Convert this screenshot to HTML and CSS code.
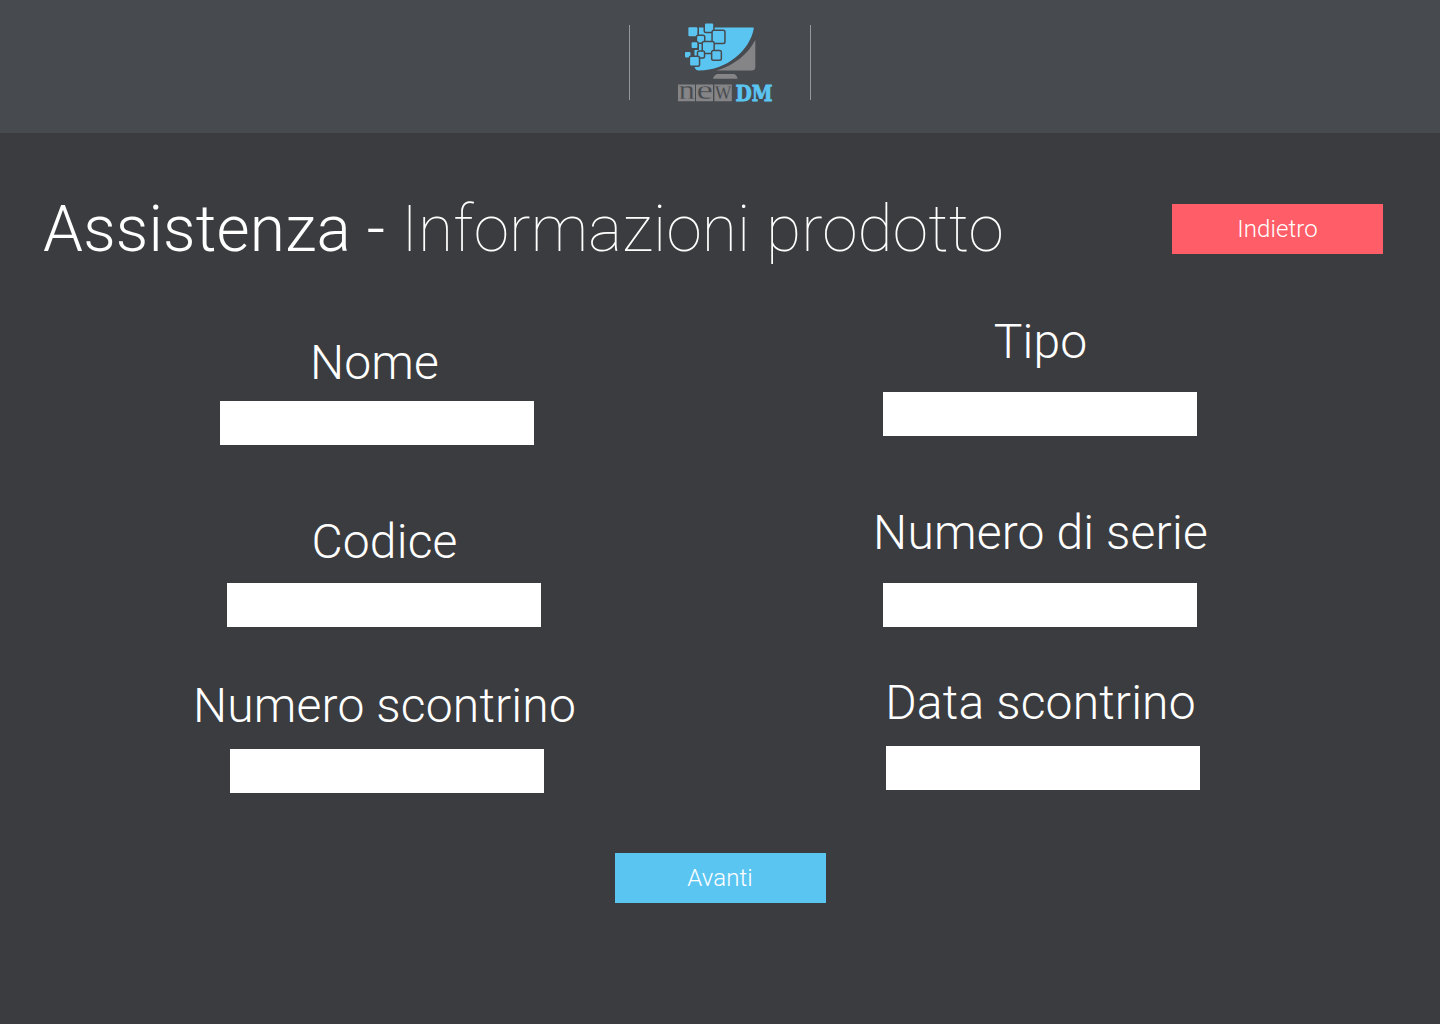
FILE: index.html
```html
<!DOCTYPE html>
<html lang="it">
<head>
<meta charset="utf-8">
<title>newDM - Assistenza</title>
<link rel="stylesheet" href="styles.css">
</head>
<body>
<header class="topbar">
  <div class="brand">
    <svg class="logo" viewBox="675 20 100 92" role="img" aria-label="newDM">
      <path class="blue" d="M699 27.5H753Q754 27.5 753.8 28.5C750 50 727 70.5 699 70.5Q695.5 70.5 694.5 67V50H699Z"/>
      <path class="grey" d="M755.3 40V67Q755.3 70.5 751.5 70.5H716.5C735 65 748 54 755.3 40Z"/>
      <path class="grey" d="M717 74H734Q737 75 737.5 78.8H713Q714 75 717 74Z"/>
      <g class="pixels">
        <rect x="688.4" y="27.3" width="9" height="9" rx="1"/>
        <rect x="705" y="23.5" width="8.2" height="8.2" rx="1"/>
        <rect x="712.8" y="31" width="11.4" height="11.8" rx="1"/>
        <rect x="697.2" y="36" width="6.8" height="6.6" rx="1"/>
        <rect x="691.6" y="42.3" width="5.7" height="5.7" rx="1"/>
        <rect x="703" y="42.2" width="10.4" height="10.6" rx="1"/>
        <rect x="685" y="51.9" width="5.5" height="5.5" rx="1"/>
        <rect x="698.2" y="51.7" width="5.6" height="5.6" rx="1"/>
        <rect x="712.4" y="51.2" width="8.2" height="8.2" rx="1"/>
        <rect x="690.1" y="56.9" width="8.7" height="8.7" rx="1"/>
      </g>
      <path class="grey" d="M678 84.4h17v16.8h-17zM696 84.4h17v16.8h-17zM714.4 84.4h17.4v16.8h-17.4z"/>
      <g class="word-new">
        <text x="678.4" y="99" textLength="16.4" lengthAdjust="spacingAndGlyphs">n</text>
        <text x="696.4" y="99" textLength="16.4" lengthAdjust="spacingAndGlyphs">e</text>
        <text x="714.5" y="99" textLength="17.2" lengthAdjust="spacingAndGlyphs">w</text>
      </g>
      <text class="word-dm" x="735.5" y="100.8" textLength="37" lengthAdjust="spacingAndGlyphs">DM</text>
    </svg>
  </div>
</header>
<main class="page">
  <div class="heading">
    <h1 class="title">Assistenza - <span class="subtitle">Informazioni prodotto</span></h1>
    <button class="button button-back" type="button">Indietro</button>
  </div>
  <form class="product-form">
    <div class="columns">
      <div class="column column-left">
        <div class="field nome"><label for="nome">Nome</label><input id="nome"></div>
        <div class="field codice"><label for="codice">Codice</label><input id="codice"></div>
        <div class="field scontrino"><label for="scontrino">Numero scontrino</label><input id="scontrino"></div>
      </div>
      <div class="column column-right">
        <div class="field tipo"><label for="tipo">Tipo</label><input id="tipo"></div>
        <div class="field serie"><label for="serie">Numero di serie</label><input id="serie"></div>
        <div class="field data"><label for="data">Data scontrino</label><input id="data"></div>
      </div>
    </div>
    <button class="button button-next" type="button">Avanti</button>
  </form>
</main>
</body>
</html>
```
FILE: styles.css
```css
* { box-sizing: border-box; }

body {
  margin: 0;
  min-height: 1024px;
  background: #3b3c3f;
  color: #fff;
  font-family: Roboto, sans-serif;
  font-weight: 300;
}

.topbar {
  display: flex;
  justify-content: center;
  height: 133px;
  padding-top: 20px;
  background: #474a4e;
}

.brand {
  width: 182px;
  height: 92px;
  padding-left: 46px;
  background:
    linear-gradient(#979797, #979797) 0 5px / 1px 75px no-repeat,
    linear-gradient(#979797, #979797) 100% 5px / 1px 75px no-repeat;
}

.logo { display: block; width: 100px; height: 92px; overflow: visible; }
.blue, .word-dm { fill: #5bc5f2; }
.grey { fill: #858587; }
.pixels { fill: #5bc5f2; stroke: #474a4e; stroke-width: 3px; paint-order: stroke; }
.word-new {
  fill: #474a4e;
  stroke: #858587;
  stroke-width: .3px;
  font-family: "Liberation Serif", serif;
  font-size: 27px;
  font-weight: 400;
}
.word-dm {
  font-family: "DejaVu Serif", serif;
  font-size: 22px;
  font-weight: 700;
  stroke: #5bc5f2;
  stroke-width: .9px;
}

.page { padding: 59px 57px 0 43px; }

.heading {
  display: flex;
  justify-content: space-between;
  align-items: flex-start;
  height: 122px;
}

.title {
  margin: 0;
  font-size: 64px;
  font-weight: 300;
  line-height: 75px;
  letter-spacing: .2px;
  white-space: nowrap;
}
.subtitle { font-weight: 100; }

.button {
  width: 211px;
  height: 50px;
  padding: 0;
  border: 0;
  color: #fff;
  font: 300 24px/50px Roboto, sans-serif;
  letter-spacing: .1px;
}
.button-back { margin-top: 12px; background: #ff5d67; }
.button-next { display: block; margin: 60px 0 0 572px; padding-right: 1px; background: #5bc5f2; }

.columns {
  display: grid;
  grid-template-columns: 663px 1fr;
  height: 479px;
}
.column { display: flex; flex-direction: column; align-items: flex-start; }
.column-left { padding: 21px 0 0 134px; }
.column-right { padding-left: 134px; }

.field { display: flex; flex-direction: column; align-items: center; width: 400px; }
.field label {
  font-size: 48px;
  line-height: 56px;
  letter-spacing: .17px;
  white-space: nowrap;
}
.field input {
  width: 314px;
  height: 44px;
  padding: 0 12px;
  border: 0;
  background: #fff;
  font: 300 24px Roboto, sans-serif;
}

.nome { gap: 10px; }
.codice { gap: 13px; margin: 69px 0 0 7px; }
.scontrino { gap: 15px; margin: 51px 0 0 10px; }
.tipo, .serie { gap: 22px; }
.serie { margin-top: 69px; }
.data { gap: 15px; margin: 48px 0 0 3px; }

.nome label { margin-right: 5px; }
.codice label, .serie label, .tipo label { margin-left: 1px; }
.scontrino label, .data label { margin-right: 5px; }
```
